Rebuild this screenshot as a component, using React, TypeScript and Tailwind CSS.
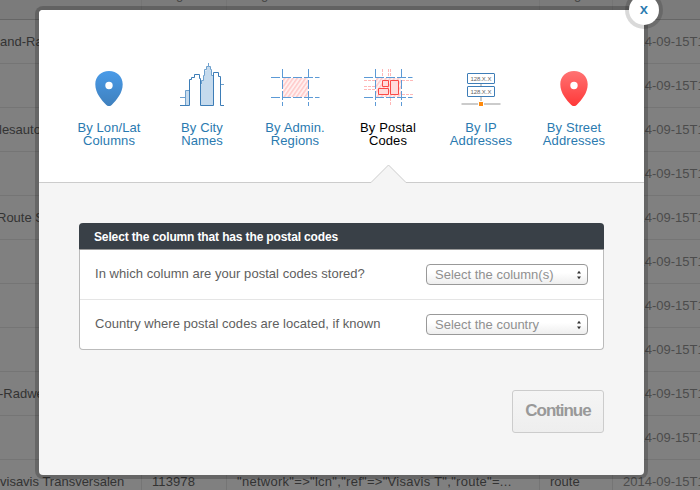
import React from "react";

type Row = { name: string; shift: string; id?: string; tags?: string; type?: string; date: string };

const blank = { name: "", shift: "ml-0" };
const stamp = "2014-09-15T12:00:00Z";
const rows: Row[] = [
  { name: "and-Ra", shift: "ml-0", date: stamp },
  { ...blank, date: stamp },
  { name: "lesauto", shift: "-ml-px", date: stamp },
  { ...blank, date: stamp },
  { name: "Route S", shift: "-ml-[3px]", date: stamp },
  { ...blank, date: stamp },
  { ...blank, date: stamp },
  { ...blank, date: stamp },
  { name: "-Radwe", shift: "-ml-px", date: stamp },
  { ...blank, date: stamp },
  {
    name: "visavis Transversalen",
    shift: "ml-0",
    id: "113978",
    tags: '"network"=>"lcn","ref"=>"Visavis T","route"=...',
    type: "route",
    date: stamp,
  },
];

const cols = "grid grid-cols-[142px_85px_313px_73px_87px]";
const cell = "overflow-hidden border-r border-[#757575]";

function DataTable() {
  return (
    <div className="h-[490px] w-[700px] overflow-hidden bg-[#808080] text-[13px] leading-[44px] whitespace-nowrap text-[#333]">
      <div className={`${cols} h-5 border-b border-[#666] bg-[#7b7b7b] text-[#444]`}>
        <div className={`${cell} -indent-[5px]`}>
          <div className="-mt-[6px] leading-[1px]">y</div>
        </div>
        <div className={`${cell} pl-[34px]`}>
          <div className="-mt-[6px] leading-[1px]">g</div>
        </div>
        <div className={`${cell} pl-[34px]`}>
          <div className="-mt-[6px] leading-[1px]">g</div>
        </div>
        <div className={`${cell} pl-[34px]`}>
          <div className="-mt-[6px] leading-[1px]">g</div>
        </div>
        <div />
      </div>
      {rows.map((r, i) => (
        <div key={i} className={`${cols} h-11 border-b border-[#757575]`}>
          <div className={cell}>
            <div className={r.shift}>{r.name}</div>
          </div>
          <div className={`${cell} pl-2.5 tracking-[0.1px]`}>{r.id}</div>
          <div className={`${cell} pl-2.5 tracking-[0.28px]`}>{r.tags}</div>
          <div className={`${cell} pl-2.5`}>{r.type}</div>
          <div className="overflow-hidden pl-2.5 text-[#4c4c4c]">{r.date}</div>
        </div>
      ))}
    </div>
  );
}

function Pin({ id, from, to }: { id: string; from: string; to: string }) {
  return (
    <svg width="44" height="44" viewBox="0 0 44 44">
      <defs>
        <linearGradient id={id} x1="0" y1="0" x2="0" y2="1">
          <stop offset="0" stopColor={from} />
          <stop offset="1" stopColor={to} />
        </linearGradient>
      </defs>
      <path
        fillRule="evenodd"
        fill={`url(#${id})`}
        d="M22 9C14 9 8.3 14.8 8.3 22.2C8.3 31 14.5 38 19.3 43Q22 45.5 24.7 43C29.5 38 35.7 31 35.7 22.2C35.7 14.8 30 9 22 9ZM22 19.8A3.7 3.7 0 1 1 22 27.2A3.7 3.7 0 1 1 22 19.8Z"
      />
    </svg>
  );
}

function City() {
  return (
    <svg width="44" height="44" viewBox="0 0 44 44" fill="none">
      <path d="M5.500 43V28.500H9.500V43ZM20.500 43V22.500H21.500V18.500H23.500V13.500H24.500V8.500H26.500V4.500H30.500V8.500H31.500V13.500H33.500V43Z" fill="#c5daed" />
      <path d="M0 35.500H5.500M5.500 43V28.500H9.500M21.500 22V18.500H23.500V13.500H24.500V7.500H26.500V4.500H28.500V1M28.500 4.500H30.500V7.500H31.500V13.500H33.500M40.500 22.500H44" stroke="#6ea0cd" />
      <path d="M0 43.500H9.500V17.500H11.500V15.500H14.500V12.500H19.500V16.500H20.500V43.500H33.500V10.500H38.500V14.500H40.500V43.500H44" stroke="#3d7db7" />
    </svg>
  );
}

function Hatch({ id }: { id: string }) {
  return (
    <defs>
      <pattern id={id} width="3.4" height="4" patternUnits="userSpaceOnUse" patternTransform="rotate(35)">
        <rect width="3.4" height="4" fill="#fff0f0" />
        <rect width="1.500" height="4" fill="#ffcaca" />
      </pattern>
    </defs>
  );
}

function RegionLines() {
  return (
    <g stroke="#5c9ad6" strokeDasharray="9 2">
      <path d="M0 16.500H48.500M0 36.500H48.500" />
      <path d="M11.500 8V45M37.500 8V45" />
    </g>
  );
}

function Regions() {
  return (
    <svg width="48" height="46" viewBox="0 1 48 46" fill="none" overflow="visible">
      <Hatch id="region-hatch" />
      <rect x="12" y="17" width="25" height="19" fill="url(#region-hatch)" />
      <RegionLines />
    </svg>
  );
}

function Postal() {
  return (
    <svg width="48" height="46" viewBox="0 1 48 46" fill="none" overflow="visible">
      <Hatch id="postal-hatch" />
      <rect x="12" y="17" width="25" height="19" fill="url(#postal-hatch)" />
      <path
        d="M0 19.500H12M0 25.500H12M0 28.500H12M38 19.500H49M38 33.500H49M18.500 8V17M24.500 8V17M26.500 8V17M26.500 37V45"
        stroke="#ffb8b8"
        strokeDasharray="3 1"
      />
      <RegionLines />
      <path d="M18.500 19.500H24.500V25.500H18.500ZM26.500 19.500H34.500V33.500H26.500ZM14.500 27.500H24.500V33.500H14.500Z" fill="#ffdcdc" stroke="#fb4a48" />
    </svg>
  );
}

function Ip() {
  return (
    <svg width="40" height="44" viewBox="0 0 40 44">
      <path d="M20 21V42M0.500 42H39.500" stroke="#bbb" strokeWidth="1.500" />
      <rect x="6.500" y="11.500" width="27" height="10" rx="0.500" fill="#fff" stroke="#3d7db7" />
      <rect x="6.500" y="24.500" width="27" height="10" rx="0.500" fill="#fff" stroke="#3d7db7" />
      <g fontFamily="Liberation Sans, sans-serif" fontSize="6" fill="#666">
        <text x="9.500" y="19" textLength="21">128.X.X</text>
        <text x="9.500" y="32" textLength="21">128.X.X</text>
      </g>
      <path d="M17.500 39.500H22.500V44.500H17.500Z" fill="#ff8a0c" stroke="#fff" />
    </svg>
  );
}

const tabs = [
  { icon: <Pin id="pin-blue" from="#4a9be8" to="#3f80bd" />, top: "By Lon/Lat", bottom: "Columns" },
  { icon: <City />, top: "By City", bottom: "Names" },
  { icon: <Regions />, top: "By Admin.", bottom: "Regions" },
  { icon: <Postal />, top: "By Postal", bottom: "Codes", active: true },
  { icon: <Ip />, top: "By IP", bottom: "Addresses" },
  { icon: <Pin id="pin-red" from="#ff7373" to="#ff3838" />, top: "By Street", bottom: "Addresses" },
];

function Tab({ icon, top, bottom, active }: { icon: React.ReactNode; top: string; bottom: string; active?: boolean }) {
  return (
    <div className={`relative flex h-[173px] w-[93px] flex-col items-center pl-px text-center text-[13px] leading-[13px] tracking-[0.1px] ${active ? "text-black" : "text-[#2a7ab0]"}`}>
      <div className="mt-[52px] flex h-[59px] justify-center">{icon}</div>
      <div>{top}</div>
      <div>{bottom}</div>
      {active && (
        <svg className="absolute bottom-0 left-[29px]" width="38" height="19" viewBox="0 0 38 19">
          <path d="M0 19V18.500H1L18.500 1L36 18.500H38V19Z" fill="#f5f5f5" />
          <path d="M0 18.500H1L18.500 1L36 18.500H38" fill="none" stroke="#ccc" />
        </svg>
      )}
    </div>
  );
}

function Select({ label }: { label: string }) {
  return (
    <div className="flex h-[21px] w-[162px] items-center justify-between rounded-[4px] border border-[#999] bg-linear-to-b from-white from-40% to-[#eee] pr-[5px] pl-2 text-[13px] leading-[19px] text-[#909090]">
      <span>{label}</span>
      <svg width="6" height="10" viewBox="0 0 6 10" fill="#333">
        <path d="M3 0.800L5 3.500H1ZM3 9.200L1 6.500H5Z" />
      </svg>
    </div>
  );
}

export default function App() {
  return (
    <div className="relative h-[490px] w-[700px] overflow-hidden font-['Liberation_Sans',Arial,sans-serif]">
      <DataTable />
      <div className="absolute top-[10px] left-[39px] h-[465px] w-[605px] rounded-[4px] bg-[#f5f5f5] shadow-[0_0_0_4px_rgba(0,0,0,0.2)]">
        <div className="flex h-[173px] justify-start rounded-t-[4px] border-b border-[#ccc] bg-white pl-[23px]">
          {tabs.map((t) => (
            <Tab key={t.top} {...t} />
          ))}
        </div>
        <div className="mt-10 mr-10 ml-10 h-[127px] w-[525px] rounded-[4px] border border-t-0 border-[#bbb] bg-white text-[13px] text-[#606060]">
          <div className="-mx-px h-[27px] rounded-t-[4px] border-b border-[#999] bg-[#394047] pl-[15px] text-[12px] leading-[28px] font-bold tracking-[-0.14px] text-white">
            Select the column that has the postal codes
          </div>
          <div className="flex h-[50px] items-center justify-between border-b border-[#e5e5e5] pr-[15px] pl-[15px]">
            <span className="-mt-px tracking-[0.04px]">In which column are your postal codes stored?</span>
            <Select label="Select the column(s)" />
          </div>
          <div className="flex h-[49px] items-center justify-between pr-[15px] pl-[15px]">
            <span className="-mt-px tracking-[0.03px]">Country where postal codes are located, if known</span>
            <Select label="Select the country" />
          </div>
        </div>
        <div className="mt-10 mr-10 flex justify-end">
          <div className="flex h-[43px] w-[92px] items-center justify-center rounded-[3px] border border-[#ccc] bg-linear-to-b from-[#f5f5f5] to-[#eee] pb-[2px] text-[17px] font-bold tracking-[-1.05px] text-[#999]">
            Continue
          </div>
        </div>
        <div className="absolute -top-[15px] left-[590px] flex h-[30px] w-[30px] items-center justify-center rounded-full bg-white pb-[3px] font-['Open_Sans',sans-serif] text-[15px] font-semibold text-[#2a7ab0] shadow-[0_0_0_4px_rgba(0,0,0,0.15)]">
          x
        </div>
      </div>
    </div>
  );
}
